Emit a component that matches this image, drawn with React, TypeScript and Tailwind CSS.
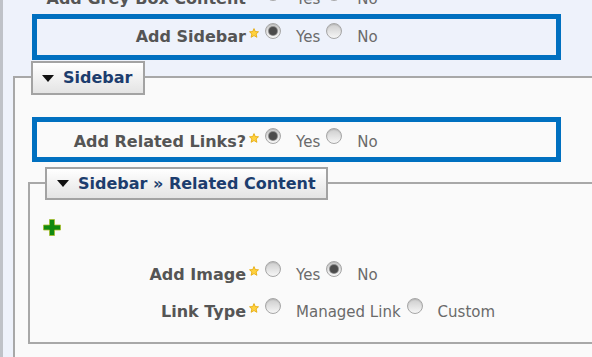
import React from "react"

const Star = () => (
  <svg width="10" height="10" viewBox="0 0 10 10">
    <polygon
      points="5,0.6 6.3,3.6 9.5,3.8 7.1,6 7.9,9.3 5,7.6 2.1,9.3 2.9,6 0.5,3.8 3.7,3.6"
      fill="#ffd23f"
      stroke="#e3a400"
      strokeWidth="0.8"
    />
  </svg>
)

function Radio({ checked }: { checked?: boolean }) {
  return (
    <span className="-mt-[4px] flex h-[16px] w-[16px] shrink-0 items-center justify-center rounded-full border border-[#a6a6a6] bg-linear-to-b from-[#cdcdcd] to-[#f6f6f6] shadow-[inset_0_1px_1px_rgba(0,0,0,0.12)]">
      {checked && <span className="h-[8px] w-[8px] rounded-full bg-[#4b4b4b] ring-1 ring-[#8a8a8a]" />}
    </span>
  )
}

function Field({ label, labelW, options, checked }: { label: string; labelW: string; options: string[]; checked: number }) {
  return (
    <div className="flex h-[20px] items-start leading-[20px]">
      <span className={`${labelW} flex shrink-0 items-start justify-end text-[16px] font-bold text-[#555555]`}>
        {label}
        <span className="ml-[3px] mt-[1px]">
          <Star />
        </span>
      </span>
      <span className="ml-[6px] flex items-start">
        {options.map((o, i) => (
          <span key={o} className={`flex items-start ${i > 0 ? "ml-[6px]" : ""}`}>
            <Radio checked={i === checked} />
            <span className="ml-[15px] text-[15px] text-[#6a6a6a]">{o}</span>
          </span>
        ))}
      </span>
    </div>
  )
}

function Legend({ title, className }: { title: string; className: string }) {
  return (
    <div className={`flex w-fit items-center border-2 border-[#a3a3a3] bg-linear-to-b from-white to-[#e4e4e4] text-[16px] font-bold text-[#1c3d6e] ${className}`}>
      <svg width="12" height="7" viewBox="0 0 12 7">
        <polygon points="0,0 12,0 6,7" fill="#111" />
      </svg>
      <span className="ml-[9px]">{title}</span>
    </div>
  )
}

export default function App() {
  return (
    <div className="flex h-[357px] w-[592px] flex-col overflow-hidden border-l-[3px] border-[#bfc2c8] bg-[#eef2fb] font-['DejaVu_Sans',sans-serif]">
      <div className="-mt-[11px]">
        <Field label="Add Grey Box Content" labelW="w-[256px]" options={["Yes", "No"]} checked={-1} />
      </div>

      <div className="ml-[29px] mt-[5px] h-[46px] w-[529px] shrink-0 border-[5px] border-[#0070c0] pt-[8px]">
        <Field label="Add Sidebar" labelW="w-[222px]" options={["Yes", "No"]} checked={0} />
      </div>

      <div className="ml-[10px] mt-[16px] flex-1 border-l-2 border-t-2 border-[#a8a8a8] bg-[#fafafa]">
        <Legend title="Sidebar" className="-mt-[17px] ml-[16px] h-[34px] pl-[9px] pr-[11px]" />

        <div className="ml-[17px] mt-[22px] h-[45px] w-[529px] border-[5px] border-[#0070c0] pt-[10px]">
          <Field label="Add Related Links?" labelW="w-[222px]" options={["Yes", "No"]} checked={0} />
        </div>

        <div className="ml-[13px] mt-[20px] border-b-2 border-l-2 border-t-2 border-[#a8a8a8] pb-[20px]">
          <Legend title="Sidebar » Related Content" className="-mt-[17px] ml-[15px] h-[33px] pl-[10px] pr-[10px]" />

          <div className="ml-[13px] mt-[19px] w-fit">
            <svg width="18" height="17" viewBox="0 0 18 17">
              <path d="M6.5 0.5H11.5V6H17.5V11H11.5V16.5H6.5V11H0.5V6H6.5Z" fill="#118a11" stroke="#a7bd2c" strokeWidth="0.8" />
            </svg>
          </div>

          <div className="mt-[29px]">
            <Field label="Add Image" labelW="w-[229px]" options={["Yes", "No"]} checked={1} />
          </div>
          <div className="mt-[17px]">
            <Field label="Link Type" labelW="w-[229px]" options={["Managed Link", "Custom"]} checked={-1} />
          </div>
        </div>
      </div>
    </div>
  )
}
